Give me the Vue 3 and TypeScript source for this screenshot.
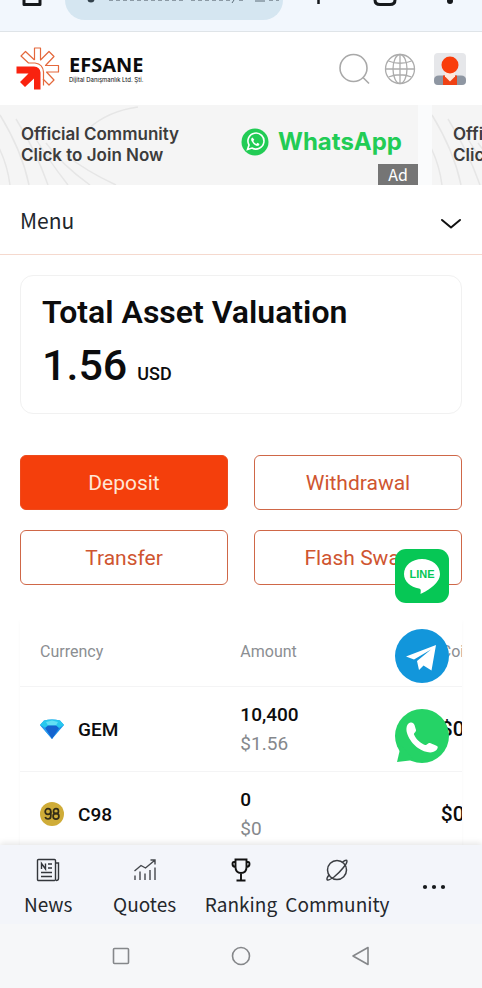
<script setup lang="ts">
interface Asset {
  symbol: string
  icon: 'gem' | 'c98'
  amount: string
  value: string
  price: string
}

interface Action {
  label: string
  primary?: boolean
}

interface Tab {
  label: string
  icon: string
}

const actions: Action[] = [
  { label: 'Deposit', primary: true },
  { label: 'Withdrawal' },
  { label: 'Transfer' },
  { label: 'Flash Swap' },
]

const assets: Asset[] = [
  { symbol: 'GEM', icon: 'gem', amount: '10,400', value: '$1.56', price: '$0' },
  { symbol: 'C98', icon: 'c98', amount: '0', value: '$0', price: '$0' },
]

const tabs: Tab[] = [
  { label: 'News', icon: 'news' },
  { label: 'Quotes', icon: 'quotes' },
  { label: 'Ranking', icon: 'ranking' },
  { label: 'Community', icon: 'community' },
]

const banners: number[] = [1, 2]
</script>

<template>
  <div class="page">
    <div class="browser-bar">
      <svg class="home" width="22" height="20" viewBox="0 0 22 20" fill="none" stroke="#16191c" stroke-width="3">
        <path d="M3 0V17.5H19V0" stroke-linejoin="round" />
      </svg>
      <div class="address">
        <svg width="202" height="5" viewBox="0 0 202 5" fill="none">
          <circle cx="10" cy="-1" r="3.5" fill="#33424c" />
          <path d="M28 .5H104M110 .5H150M158 .5H164M188 .5H198" stroke="#8c9aa5" stroke-width="1" stroke-dasharray="4 3" />
          <path d="M153 0L151 3M174 1H184" stroke="#5c6c78" stroke-width="1" />
        </svg>
      </div>
      <svg class="tools" width="160" height="8" viewBox="0 0 160 8" fill="none" stroke="#16191c" stroke-width="3">
        <path d="M14.500 0V4" stroke-width="2.500" />
        <path d="M71 0Q71 4.500 76 4.500H86Q91 4.500 91 0" />
        <circle cx="146" cy="1" r="3" fill="#16191c" stroke="none" />
      </svg>
    </div>

    <header class="site-header">
      <a class="brand" href="#" aria-label="Efsane">
        <svg width="44" height="44" viewBox="0 0 44 44" fill="none">
          <g stroke="#e4683c" stroke-width="1.200" stroke-linejoin="round">
            <path d="M18.500 13V1H24.500V13L33 4.500L38 9.500L29.500 18.500H42.500V25H30.500L38 33L33 38L27 32" />
            <path d="M18.500 13L9.500 4.500L5 9L12.500 16H19Q27 17 27.500 25V38.500" />
          </g>
          <path d="M.5 19.500H18Q24 20 24.500 25.500V42.500H18V31.500L9 40L4 35L12.500 26.500H.5Z" fill="#f9220f" />
        </svg>
        <span class="brand-text">
          <strong>EFSANE</strong>
          <small>Dijital Danışmanlık Ltd. Şti.</small>
        </span>
      </a>
      <div class="header-tools">
        <button class="icon-button" type="button" aria-label="Search">
          <svg width="32" height="32" viewBox="0 0 32 32" fill="none" stroke="#a9a9a9" stroke-width="1.600">
            <circle cx="15.500" cy="15" r="13.500" />
            <path d="M25 24.500L31 30.500" />
          </svg>
        </button>
        <button class="icon-button" type="button" aria-label="Language">
          <svg width="32" height="32" viewBox="0 0 32 32" fill="none" stroke="#acacac" stroke-width="1.300">
            <circle cx="16" cy="16" r="14.500" />
            <ellipse cx="16" cy="16" rx="7" ry="14.500" />
            <path d="M16 1.500V30.500M1.500 16H30.500M4.500 8Q16 12.500 27.500 8M4.500 24Q16 19.500 27.500 24" />
          </svg>
        </button>
        <button class="icon-button avatar" type="button" aria-label="Account">
          <svg width="32" height="32" viewBox="0 0 32 32">
            <rect width="32" height="32" rx="4" fill="#e6e7ea" />
            <path d="M0 27Q0 22.500 5 22.500H27Q32 22.500 32 27V28Q32 32 28 32H4Q0 32 0 28Z" fill="#8e96a2" />
            <path d="M9 22.500H23V32H9Z" fill="#ef4115" />
            <path d="M11 19H21V23.500L16 28.500L11 23.500Z" fill="#ffe9dc" />
            <circle cx="16" cy="12" r="8.500" fill="#f93d0b" />
          </svg>
        </button>
      </div>
    </header>

    <section class="banners" aria-label="Promotions">
      <a v-for="n in banners" :key="n" class="banner" href="#">
        <svg class="waves" width="140" height="80" viewBox="0 0 140 80" fill="none" stroke="#e6e6e6" stroke-width="1.500">
          <path d="M-14 22Q6 48 10 80M0 10Q22 46 29 80M16 14Q36 46 48 80M30 24Q46 52 68 80M46 38Q62 60 90 80M66 50Q86 66 116 80M88 24Q108 6 138 2" />
        </svg>
        <span class="banner-text">Official Community<br />Click to Join Now</span>
        <span class="banner-brand">
          <svg width="28" height="28" viewBox="0 0 28 28">
            <circle cx="14" cy="14" r="13.500" fill="#22cc55" />
            <path d="M6.500 21.500L8 17A8 8 0 1 1 11 20Z" fill="none" stroke="#fff" stroke-width="1.600" />
            <path d="M11.500 9.500Q9.500 10.500 10.500 13Q12.500 17 16 18Q18.500 18 18.500 16L16.500 14.800L15.300 16Q13.200 15 12.300 13L13.300 11.800Z" fill="#fff" />
          </svg>
          WhatsApp
        </span>
        <span class="ad">Ad</span>
      </a>
    </section>

    <button class="menu" type="button">
      Menu
      <svg width="22" height="12" viewBox="0 0 22 12" fill="none" stroke="#111" stroke-width="2" stroke-linecap="round" stroke-linejoin="round">
        <path d="M2 2L11 9.500L20 2" />
      </svg>
    </button>

    <main class="content">
      <section class="valuation">
        <h1>Total Asset Valuation</h1>
        <p><b>1.56</b> <span>USD</span></p>
      </section>

      <div class="actions">
        <button v-for="a in actions" :key="a.label" type="button" :class="['action', { primary: a.primary }]">
          {{ a.label }}
        </button>
      </div>

      <div class="assets">
        <table>
          <thead>
            <tr>
              <th>Currency</th>
              <th>Amount</th>
              <th>Coin</th>
            </tr>
          </thead>
          <tbody>
            <tr v-for="a in assets" :key="a.symbol">
              <td>
                <div class="coin">
                  <svg v-if="a.icon === 'gem'" width="24" height="24" viewBox="0 0 24 24">
                    <path d="M4 3.500Q12 1.500 20 3.500L24 8L12 22L0 8Z" fill="#1a8fe8" />
                    <path d="M4 3.500Q12 1.500 20 3.500L24 8L19 11H5L0 8Z" fill="#27c8ee" />
                    <path d="M6 5L12 3.500L18 5L16 8.500H8Z" fill="#62e0f4" />
                    <path d="M5 11L8 8.500H16L19 11L12 22Z" fill="#1463cf" />
                    <path d="M0 8L5 11L12 22Z" fill="#2a9bee" />
                  </svg>
                  <svg v-else width="24" height="24" viewBox="0 0 24 24">
                    <circle cx="12" cy="12" r="12" fill="#cfac38" />
                    <g fill="none" stroke="#332c17" stroke-width="1.700">
                      <circle cx="8" cy="9.500" r="2.800" />
                      <path d="M10.800 9.500V14Q10.800 17 8 17Q5.800 17 5.200 15" />
                      <circle cx="16" cy="9.200" r="2.500" />
                      <circle cx="16" cy="14.300" r="2.900" />
                    </g>
                  </svg>
                  {{ a.symbol }}
                </div>
              </td>
              <td>
                <div class="amount">{{ a.amount }}</div>
                <div class="value">{{ a.value }}</div>
              </td>
              <td class="price">{{ a.price }}</td>
            </tr>
          </tbody>
        </table>
      </div>
    </main>

    <nav class="tabs">
      <a v-for="t in tabs" :key="t.label" class="tab" href="#">
        <svg v-if="t.icon === 'news'" width="24" height="24" viewBox="0 0 24 24" fill="none" stroke="#33363b" stroke-width="1.400">
          <rect x="1.500" y="1.500" width="18" height="21" rx="1" />
          <path d="M19.500 5H22.500V20.500Q22.500 22.500 20 22.500M5 14.500H16M5 18.500H16M5.500 11V5.500L9.500 11V5.500M12 6H16M12 10H16" />
        </svg>
        <svg v-else-if="t.icon === 'quotes'" width="24" height="24" viewBox="0 0 24 24" fill="none" stroke="#44474c" stroke-width="1.400">
          <path d="M1.500 13L8 7.500L12.500 10L21.500 2.500M17.500 2H22V6.500M2 22V17.500M7 22V13.500M12 22V15.500M17 22V12M22 22V9.500" />
        </svg>
        <svg v-else-if="t.icon === 'ranking'" width="24" height="24" viewBox="0 0 24 24" fill="none" stroke="#111" stroke-width="1.900">
          <path d="M6.500 1.500H17.500V9Q17.500 15 12 15Q6.500 15 6.500 9ZM6.500 4H5Q3.500 4 3.500 6Q3.500 9 7 9M17.500 4H19Q20.500 4 20.500 6Q20.500 9 17 9M12 15V22.500M7.500 22.500H16.500" />
        </svg>
        <svg v-else width="24" height="24" viewBox="0 0 24 24" fill="none" stroke="#3a3d42" stroke-width="1.500">
          <circle cx="12" cy="12" r="9.500" />
          <path d="M17.500 4Q20.500 1.800 21.800 2.500Q22.800 4.500 18 10Q14 15 9 19Q3.500 22.800 2.200 21.800Q1.200 20.500 4 17" />
        </svg>
        <span>{{ t.label }}</span>
      </a>
      <button class="more" type="button" aria-label="More">
        <svg width="24" height="6" viewBox="0 0 24 6" fill="#17191c">
          <circle cx="3" cy="3" r="2.100" />
          <circle cx="12" cy="3" r="2.100" />
          <circle cx="21" cy="3" r="2.100" />
        </svg>
      </button>
    </nav>

    <div class="system-bar">
      <svg width="20" height="20" viewBox="0 0 20 20" fill="none" stroke="#85878a" stroke-width="1.600">
        <rect x="2.500" y="2.500" width="15" height="15" rx="1" />
      </svg>
      <svg width="20" height="20" viewBox="0 0 20 20" fill="none" stroke="#85878a" stroke-width="1.600">
        <circle cx="10" cy="10" r="8.500" />
      </svg>
      <svg width="20" height="20" viewBox="0 0 20 20" fill="none" stroke="#85878a" stroke-width="1.600" stroke-linejoin="round">
        <path d="M17 1.500V18.500L2 10Z" />
      </svg>
    </div>

    <aside class="contacts" aria-label="Contact us">
      <a href="#" aria-label="LINE">
        <svg width="54" height="54" viewBox="0 0 54 54">
          <rect width="54" height="54" rx="11" fill="#06c755" />
          <path d="M27 10C17 10 9 16.500 9 25C9 32.500 15.500 38 24 39.500C26 40 26 41 25.500 45C30 43 45 35 45 25C45 16.500 37 10 27 10Z" fill="#fff" />
          <text class="line-word" x="27" y="29" text-anchor="middle">LINE</text>
        </svg>
      </a>
      <a href="#" aria-label="Telegram">
        <svg width="54" height="54" viewBox="0 0 54 54">
          <circle cx="27" cy="27" r="27" fill="#1296db" />
          <path d="M11 27.500L41 16L36.500 41.500L28.500 36.500L24 41L22 32L36 20.500L19 30.500Z" fill="#fff" />
        </svg>
      </a>
      <a href="#" aria-label="WhatsApp">
        <svg width="54" height="54" viewBox="0 0 54 54">
          <circle cx="27" cy="27" r="27" fill="#25d366" />
          <path d="M2 53L6 36L19 51Z" fill="#25d366" />
          <path d="M13 15C16 12.500 18.500 13.500 19.500 16L21 21C21.300 23 18.500 24 19 25.500C21.500 31 25.500 34 30 36C32 36.500 33 33.500 35 34L41 36.500C43.500 37.500 43 39 41.500 41C37 45.500 29 43 23 39C16 34 8 22 13 15Z" fill="#fff" />
        </svg>
      </a>
    </aside>
  </div>
</template>

<style>
body {
  margin: 0;
  background: #fff;
}
</style>

<style scoped>
.page {
  position: relative;
  display: flex;
  flex-direction: column;
  height: 100vh;
  overflow: hidden;
  box-sizing: border-box;
  background: #fff;
  color: #0c0c0d;
  font-family: Roboto, 'Liberation Sans', sans-serif;
}

svg {
  display: block;
  flex: none;
}

a {
  color: inherit;
  text-decoration: none;
}

button {
  margin: 0;
  border: 0;
  padding: 0;
  background: none;
  color: inherit;
  font: inherit;
}

.browser-bar {
  display: flex;
  align-items: flex-start;
  flex: none;
  height: 31px;
  overflow: hidden;
  background: #f2f7fd;
  border-bottom: 1px solid #dfe4e8;
}

.home {
  margin: -13px 22px 0 21px;
}

.address {
  flex: 1;
  height: 20px;
  padding-left: 16px;
  border-radius: 0 0 24px 24px;
  background: #d5e6f1;
  overflow: hidden;
}

.tools {
  margin: 0 18px 0 21px;
}

.site-header {
  display: flex;
  align-items: center;
  justify-content: space-between;
  flex: none;
  height: 73px;
  padding: 0 16px;
  box-sizing: border-box;
}

.brand {
  display: flex;
  align-items: center;
  gap: 9px;
}

.brand-text {
  display: flex;
  flex-direction: column;
}

.brand-text strong {
  font: 700 20px/22px 'Open Sans', sans-serif;
}

.brand-text small {
  font: 6px/8px Inter, sans-serif;
}

.header-tools {
  display: flex;
  gap: 14px;
}

.avatar {
  margin-left: 4px;
}

.banners {
  display: flex;
  flex: none;
  gap: 14px;
  height: 80px;
  overflow: hidden;
  background: #fafbfc;
}

.banner {
  position: relative;
  display: flex;
  align-items: center;
  justify-content: space-between;
  flex: none;
  width: calc(100% - 64px);
  padding: 0 16px 0 21px;
  box-sizing: border-box;
  background: #f5f5f5;
}

.waves {
  position: absolute;
  left: 0;
  top: 0;
}

.banner-text {
  position: relative;
  color: #3c3c3c;
  font: 600 17px/21px Inter, sans-serif;
  white-space: nowrap;
}

.banner-brand {
  display: flex;
  align-items: center;
  gap: 9px;
  margin-top: -6px;
  color: #22cc55;
  font: 700 24px/28px Inter, sans-serif;
}

.ad {
  position: absolute;
  right: 0;
  bottom: 0;
  width: 40px;
  background: #757575;
  color: #fff;
  font: 16px/21px 'Noto Sans CJK SC', sans-serif;
  text-align: center;
}

.menu {
  display: flex;
  align-items: flex-start;
  justify-content: space-between;
  flex: none;
  height: 70px;
  padding: 19px 20px 0;
  border-bottom: 1px solid #f5d9ce;
  color: #20262c;
  font: 21px/32px 'Noto Sans CJK SC', sans-serif;
}

.menu svg {
  margin-top: 14px;
}

.content {
  display: flex;
  flex-direction: column;
  flex: 1;
  min-height: 0;
  padding: 20px 20px 0;
  overflow: hidden;
}

.valuation {
  flex: none;
  height: 139px;
  padding: 16px 21px;
  box-sizing: border-box;
  border: 1px solid #f1f1f1;
  border-radius: 13px;
}

.valuation h1 {
  margin: 0;
  font-size: 32px;
  line-height: 40px;
  font-weight: 600;
}

.valuation p {
  margin: 8px 0 0;
  line-height: 50px;
}

.valuation b {
  margin-right: 6px;
  font-size: 43px;
  font-weight: 500;
}

.valuation span {
  font-size: 18px;
  font-weight: 500;
}

.actions {
  display: grid;
  flex: none;
  grid-template-columns: 1fr 1fr;
  gap: 20px 26px;
  margin-top: 41px;
}

.action {
  height: 55px;
  border: 1px solid #cf6748;
  border-radius: 6px;
  color: #cf5530;
  font-size: 21px;
  line-height: 28px;
}

.action.primary {
  border-color: #ee4a1c;
  background: #f43f0c;
  color: #ffe6d5;
}

.assets {
  flex: none;
  margin-top: 32px;
  overflow: hidden;
  box-shadow: 0 4px 4px #00000008;
}

table {
  width: 136%;
  border-collapse: collapse;
  table-layout: fixed;
}

th,
td {
  height: 84px;
  padding: 0 0 0 20px;
  border-bottom: 1px solid #f4f4f5;
  font-weight: 500;
  text-align: left;
}

th {
  height: 69px;
  color: #8b8e92;
  font-size: 16px;
  font-weight: 400;
}

.coin {
  display: flex;
  align-items: center;
  gap: 14px;
  font-size: 19px;
}

.amount,
.value {
  font-size: 19px;
  line-height: 29px;
}

.value {
  color: #85888c;
  font-weight: 400;
}

.price {
  font-size: 21px;
}

.tabs {
  position: relative;
  display: grid;
  grid-template-columns: repeat(5, minmax(0, 1fr));
  flex: none;
  height: 79px;
  background: #f3f5fa;
  box-shadow: 0 -2px 6px #0000001a;
}

.tab {
  display: flex;
  flex-direction: column;
  align-items: center;
  gap: 7px;
  padding-top: 13px;
  color: #24272c;
  font: 19px/30px 'Noto Sans CJK SC', sans-serif;
}

.more {
  display: flex;
  align-items: center;
  justify-content: center;
  padding-top: 4px;
}

.system-bar {
  position: relative;
  display: flex;
  align-items: center;
  justify-content: center;
  flex: none;
  gap: 100px;
  height: 64px;
  background: #f6f7f9;
}

.contacts {
  position: absolute;
  right: 33px;
  bottom: 225px;
  display: flex;
  flex-direction: column;
  gap: 26px;
}

.line-word {
  fill: #06c755;
  font: 800 11px 'Liberation Sans', sans-serif;
}
</style>
